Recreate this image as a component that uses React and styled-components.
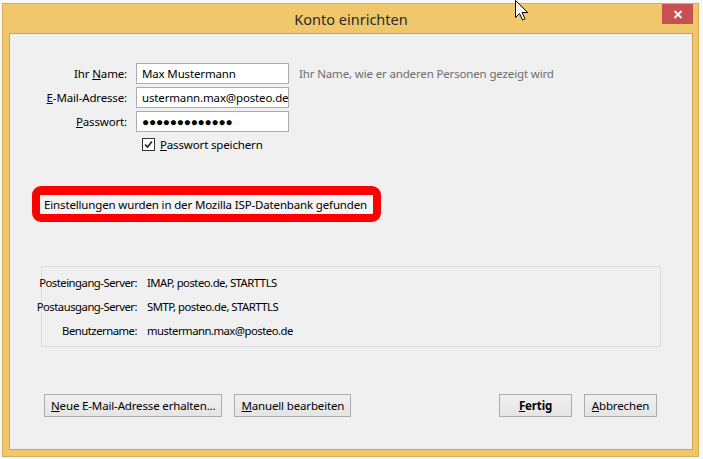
import styled, { createGlobalStyle } from "styled-components";

const Global = createGlobalStyle`
  html, body {
    margin: 0;
    padding: 0;
    background: #f8f8f8;
    width: 703px;
    height: 459px;
    overflow: hidden;
  }
  body {
    font-family: "Noto Sans", "Open Sans", sans-serif;
    font-size: 11.5px;
    letter-spacing: -0.15px;
    color: #000;
  }
`;

const Screen = styled.div`
  position: relative;
  width: 703px;
  height: 459px;
  padding: 3px 4px 2px 2px;
  box-sizing: border-box;
`;

const Window = styled.div`
  height: 454px;
  width: 697px;
  box-sizing: border-box;
  background: #f0c76b;
  border: 1px solid #d9ac50;
  display: flex;
  flex-direction: column;
  padding: 0 5px 6px 6px;
`;

const TitleBar = styled.div`
  height: 29px;
  display: flex;
  align-items: center;
  justify-content: center;
  position: relative;
  font-size: 14.5px;
  letter-spacing: 0;
  color: #2b2b2b;
`;

const CloseButton = styled.div`
  position: absolute;
  right: 0;
  top: 0;
  width: 31px;
  height: 20px;
  background: #c75050;
  display: flex;
  align-items: center;
  justify-content: center;
`;

const Client = styled.div`
  flex: 1;
  background: #f0f0f0;
  border: 1px solid #c9a454;
  display: flex;
  flex-direction: column;
  padding-top: 29px;
`;

const Form = styled.div`
  display: grid;
  grid-template-columns: 117px 153px auto;
  column-gap: 9px;
  row-gap: 3px;
  align-items: center;
`;

const Label = styled.div`
  display: flex;
  justify-content: flex-end;
  white-space: nowrap;
`;

const Field = styled.div`
  height: 21px;
  box-sizing: border-box;
  border: 1px solid #abadb3;
  background: #fff;
  padding: 0 5px;
  display: flex;
  align-items: center;
  white-space: nowrap;
  overflow: hidden;
  font-size: ${(p) => (p.dots ? "12px" : "11.5px")};
  letter-spacing: ${(p) => (p.dots ? "-0.3px" : "-0.15px")};
`;

const Hint = styled.div`
  color: #6d6d6d;
  padding-left: 1px;
  white-space: nowrap;
`;

const CheckRow = styled.label`
  display: flex;
  align-items: center;
  gap: 5px;
  margin: 5px 0 0 132px;
`;

const Box = styled.span`
  width: 13px;
  height: 13px;
  box-sizing: border-box;
  border: 1px solid #333;
  background: #fff;
  display: flex;
  align-items: center;
  justify-content: center;
`;

const Notice = styled.div`
  align-self: flex-start;
  margin: 34px 0 0 22px;
  border: 8px solid #ff0000;
  border-top-width: 9px;
  border-radius: 9px;
  padding: 0 6px 0 4px;
  line-height: 19px;
  background: #f4f4f4;
`;

const ServerBox = styled.div`
  margin: 44px 0 0 31px;
  width: 620px;
  height: 81px;
  box-sizing: border-box;
  border: 1px solid #dcdcdc;
  display: grid;
  grid-template-columns: 95px auto;
  grid-auto-rows: 24px;
  column-gap: 10px;
  align-content: center;
  align-items: center;
  font-size: 11.3px;
  letter-spacing: -0.5px;
`;

const Footer = styled.div`
  margin: auto 35px 32px 34px;
  display: flex;
  align-items: center;
  gap: 12px;
`;

const Spacer = styled.div`
  flex: 1;
`;

const Button = styled.button`
  height: 23px;
  min-width: 73px;
  padding: 0 6px;
  box-sizing: border-box;
  border: 1px solid #acacac;
  background: linear-gradient(#f0f0f0, #e5e5e5);
  font-family: inherit;
  font-size: 11.5px;
  letter-spacing: -0.15px;
  font-weight: ${(p) => (p.bold ? 700 : 400)};
  color: #000;
`;

const Cursor = styled.svg`
  position: absolute;
  left: 515px;
  top: 0;
`;

const Key = ({ children }) => <u>{children}</u>;

export default function App() {
  return (
    <>
      <Global />
      <Screen>
        <Window>
          <TitleBar>
            Konto einrichten
            <CloseButton>
              <svg width="10" height="9" viewBox="0 0 10 9">
                <path d="M1.5 1l7 7M8.5 1l-7 7" stroke="#fff" strokeWidth="1.8" />
              </svg>
            </CloseButton>
          </TitleBar>
          <Client>
            <Form>
              <Label>
                <span>
                  Ihr <Key>N</Key>ame:
                </span>
              </Label>
              <Field>Max Mustermann</Field>
              <Hint>Ihr Name, wie er anderen Personen gezeigt wird</Hint>
              <Label>
                <span>
                  <Key>E</Key>-Mail-Adresse:
                </span>
              </Label>
              <Field>ustermann.max@posteo.de</Field>
              <span />
              <Label>
                <span>
                  <Key>P</Key>asswort:
                </span>
              </Label>
              <Field dots>●●●●●●●●●●●●●</Field>
              <span />
            </Form>
            <CheckRow>
              <Box>
                <svg width="9" height="9" viewBox="0 0 9 9">
                  <path d="M1 4.5l2.5 2.5L8 1.5" fill="none" stroke="#222" strokeWidth="1.6" />
                </svg>
              </Box>
              <span>
                <Key>P</Key>asswort speichern
              </span>
            </CheckRow>
            <Notice>Einstellungen wurden in der Mozilla ISP-Datenbank gefunden</Notice>
            <ServerBox>
              <Label>
                <span>Posteingang-Server:</span>
              </Label>
              <div>IMAP, posteo.de, STARTTLS</div>
              <Label>
                <span>Postausgang-Server:</span>
              </Label>
              <div>SMTP, posteo.de, STARTTLS</div>
              <Label>
                <span>Benutzername:</span>
              </Label>
              <div>mustermann.max@posteo.de</div>
            </ServerBox>
            <Footer>
              <Button>
                <Key>N</Key>eue E-Mail-Adresse erhalten...
              </Button>
              <Button>
                <Key>M</Key>anuell bearbeiten
              </Button>
              <Spacer />
              <Button bold>
                <Key>F</Key>ertig
              </Button>
              <Button>
                <Key>A</Key>bbrechen
              </Button>
            </Footer>
          </Client>
        </Window>
        <Cursor width="13" height="21" viewBox="0 0 13 21">
          <path d="M0.5 0.5v17l4-4 3 6.5 2.5-1.2-3-6.3h5.7z" fill="#fff" stroke="#000" />
        </Cursor>
      </Screen>
    </>
  );
}
